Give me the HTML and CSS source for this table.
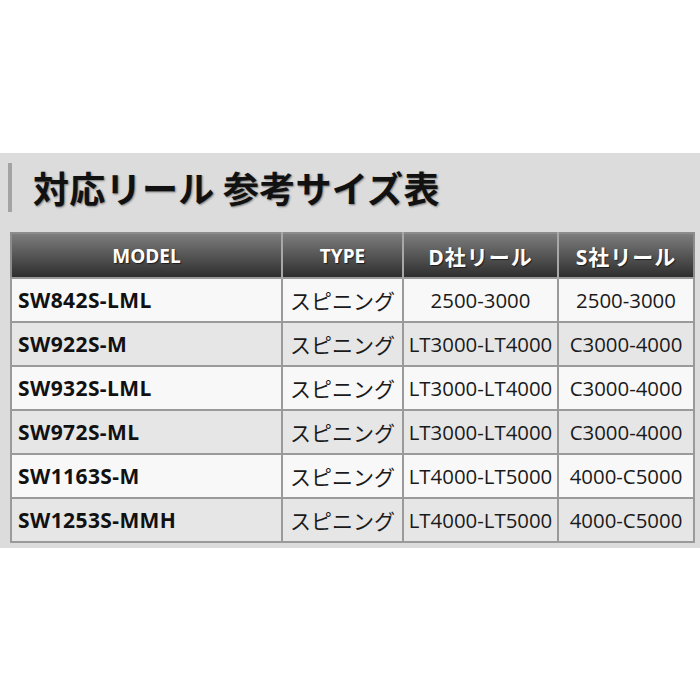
FILE: index.html
```html
<!DOCTYPE html>
<html lang="ja">
<head>
<meta charset="utf-8">
<title>対応リール 参考サイズ表</title>
<link rel="stylesheet" href="styles.css">
</head>
<body>
<div class="page">
  <section class="panel">
    <h2 class="title">対応リール 参考サイズ表</h2>
    <table class="sizes">
      <colgroup>
        <col class="c-model"><col class="c-type"><col class="c-d"><col class="c-s">
      </colgroup>
      <thead>
        <tr><th>MODEL</th><th>TYPE</th><th class="jp">D社リール</th><th class="jp">S社リール</th></tr>
      </thead>
      <tbody>
        <tr><td class="model">SW842S-LML</td><td class="type">スピニング</td><td>2500-3000</td><td>2500-3000</td></tr>
        <tr><td class="model">SW922S-M</td><td class="type">スピニング</td><td>LT3000-LT4000</td><td>C3000-4000</td></tr>
        <tr><td class="model">SW932S-LML</td><td class="type">スピニング</td><td>LT3000-LT4000</td><td>C3000-4000</td></tr>
        <tr><td class="model">SW972S-ML</td><td class="type">スピニング</td><td>LT3000-LT4000</td><td>C3000-4000</td></tr>
        <tr><td class="model">SW1163S-M</td><td class="type">スピニング</td><td>LT4000-LT5000</td><td>4000-C5000</td></tr>
        <tr><td class="model">SW1253S-MMH</td><td class="type">スピニング</td><td>LT4000-LT5000</td><td>4000-C5000</td></tr>
      </tbody>
    </table>
  </section>
</div>
</body>
</html>
```

FILE: styles.css
```css
html, body {
  margin: 0;
  padding: 0;
  background: #ffffff;
}
.page {
  padding-top: 153px;
  font-family: "Open Sans", "Noto Sans CJK JP", sans-serif;
  color: #1a1a1a;
}
.panel {
  background: #dcdcdc;
  padding: 10px 7px 5px 8px;
}
.title {
  margin: 0 0 20px 0;
  height: 49px;
  border-left: 4px solid #a3a3a3;
  padding-left: 21px;
  font-family: "Noto Sans CJK JP", sans-serif;
  font-size: 36px;
  font-weight: 700;
  line-height: 49px;
  color: #111;
  text-shadow: 1px 1px 2px rgba(0,0,0,0.45);
  letter-spacing: 0.3px;
}
.sizes {
  margin-left: 2px;
  border-collapse: collapse;
  border: 2px solid #8c8c8c;
  table-layout: fixed;
  width: 683px;
}
.c-model { width: 271px; }
.c-type { width: 121px; }
.c-d { width: 155px; }
.c-s { width: 136px; }
.sizes th {
  height: 43px;
  padding: 0;
  background: linear-gradient(#7d7d7d, #2e2e2e);
  color: #ffffff;
  font-size: 19px;
  font-weight: 700;
  text-align: center;
  border-left: 2px solid #a8a8a8;
  text-shadow: 1px 1px 1px rgba(0,0,0,0.6);
}
.sizes th.jp {
  font-size: 21px;
  letter-spacing: 1px;
}
.sizes th:first-child { border-left: none; }
.sizes td {
  height: 42px;
  padding: 0;
  border: 2px solid #9a9a9a;
  font-size: 20.4px;
  text-align: center;
  white-space: nowrap;
  overflow: hidden;
}
.sizes td.type { font-size: 21px; }
.sizes tbody tr:nth-child(odd) td { background: #f8f8f8; }
.sizes tbody tr:nth-child(even) td { background: #e6e6e6; }
.sizes td.model {
  text-align: left;
  padding-left: 6px;
  font-size: 21px;
  font-weight: 700;
  letter-spacing: 0.4px;
  color: #111;
}
```
